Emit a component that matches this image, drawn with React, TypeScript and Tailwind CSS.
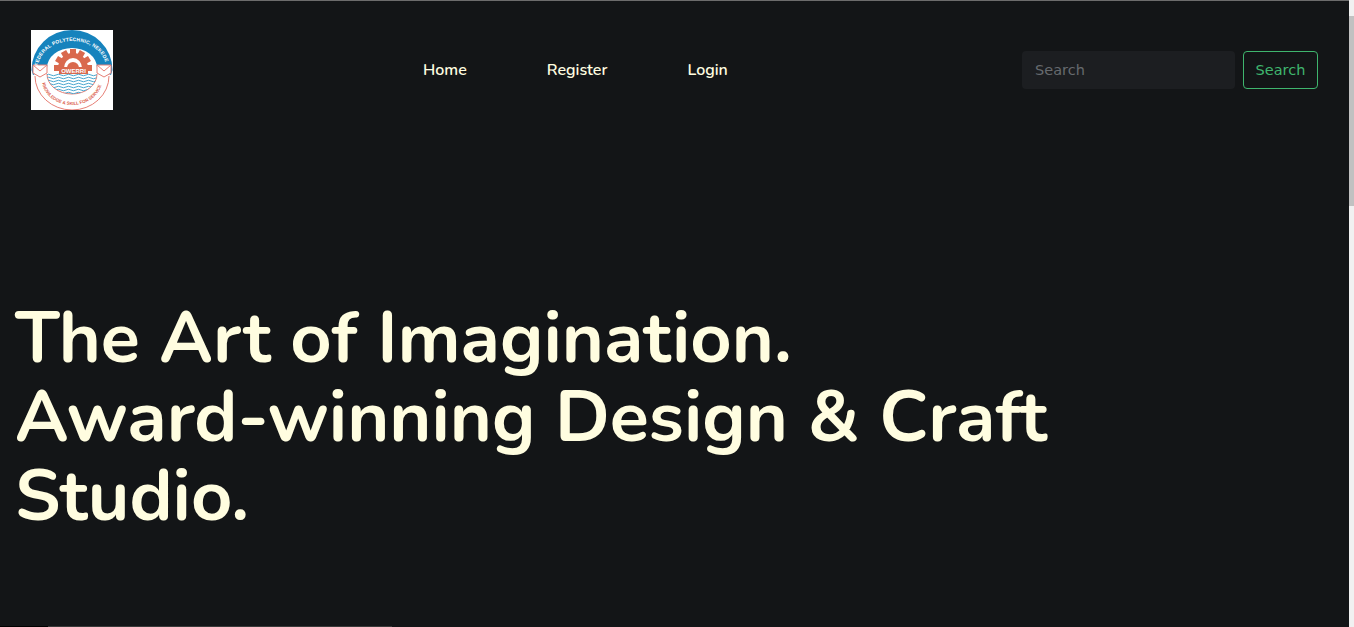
import { useId } from "react";

const gearTeeth = [-90, -60, -30, 0, 30, 60, 90];
const waves = [45, 48, 51, 54, 57, 60, 63];

function Logo() {
  const id = useId();
  return (
    <svg viewBox="0 0 82 80" className="block h-20 w-[82px] bg-white">
      <defs>
        <path id={`${id}top`} d="M7 38A34 27 0 0 1 75 38" />
        <path id={`${id}bot`} d="M11 50A30 25 0 0 0 71 50" />
        <clipPath id={`${id}water`}>
          <ellipse cx="41" cy="44" rx="25" ry="20" />
        </clipPath>
      </defs>
      <path d="M4 46A37 34 0 0 0 78 46" fill="none" stroke="#e77f76" />
      <path d="M16 44A25 20 0 0 0 66 44" fill="none" stroke="#e77f76" />
      <path d="M0.5 40A40.5 40 0 0 1 81.5 40L80 45 66 38A25 20 0 0 0 16 38L2 45Z" fill="#1683bd" />
      <path d="M2 35H16V43L9 47 2 43Z" fill="#fff" stroke="#e77f76" />
      <path d="M2 35L9 41 16 35" fill="none" stroke="#e77f76" />
      <path d="M66 35H80V43L73 47 66 43Z" fill="#fff" stroke="#e77f76" />
      <path d="M66 35L73 41 80 35" fill="none" stroke="#e77f76" />
      <g fill="#d9694e">
        {gearTeeth.map((angle) => (
          <rect key={angle} x="39" y="19" width="6" height="6" transform={`rotate(${angle} 42 38)`} />
        ))}
        <path d="M27 38A15 15 0 0 1 57 38Z" />
      </g>
      <path d="M33 38A9 10 0 0 1 51 38Z" fill="#fff" />
      <path d="M36 38A6 6 0 0 1 48 38Z" fill="#d9694e" />
      <rect x="28" y="37" width="29" height="7" fill="#d9694e" />
      <text x="42.5" y="43" textAnchor="middle" fontSize="6" fontWeight="700" fill="#fff" fontFamily="'Liberation Sans', sans-serif">
        OWERRI
      </text>
      <g clipPath={`url(#${id}water)`} fill="none" stroke="#4aa6cf" strokeWidth="1">
        {waves.map((y) => (
          <path key={y} d={`M15 ${y}q2.5-1.5 5 0t5 0 5 0 5 0 5 0 5 0 5 0 5 0 5 0 5 0 5 0`} />
        ))}
      </g>
      <text fontSize="5" fontWeight="700" fill="#fff" fontFamily="'Liberation Sans', sans-serif">
        <textPath href={`#${id}top`} startOffset="2" textLength="88">FEDERAL POLYTECHNIC, NEKEDE</textPath>
      </text>
      <text fontSize="4.5" fontWeight="700" fill="#dc5f50" fontFamily="'Liberation Sans', sans-serif">
        <textPath href={`#${id}bot`} startOffset="3" textLength="78">KNOWLEDGE &amp; SKILL FOR SERVICE</textPath>
      </text>
    </svg>
  );
}

export default function App() {
  return (
    <div className="flex h-[627px] overflow-hidden bg-[#131517]">
      <div className="relative min-w-0 flex-1 border-t border-[#6c6c6c]">
        <nav className="flex h-[138px] items-center pr-[31px] pl-[31px]">
          <Logo />
          <ul className="ml-[310px] flex gap-20 font-['Nunito',sans-serif] text-base font-semibold text-[#fffde0]">
            <li><a href="#">Home</a></li>
            <li><a href="#">Register</a></li>
            <li><a href="#">Login</a></li>
          </ul>
          <form className="ml-auto flex gap-2 font-['DejaVu_Sans',sans-serif] text-[14.5px]">
            <input
              placeholder="Search"
              className="h-[38px] w-[213px] rounded bg-[#1c1e21] px-[13px] text-white outline-none placeholder:text-[#666a6e]"
            />
            <button className="h-[38px] w-[75px] rounded border border-[#3fb56e] pt-px text-[#3fb56e]">Search</button>
          </form>
        </nav>
        <h1 className="mt-[160px] pl-[15px] font-['Nunito',sans-serif] text-[72px] leading-[79.2px] font-bold text-[#fffde0]">
          <span className="tracking-[-1px]">T</span>he Art of Imagination.
          <br />
          Award-winning Design &amp; Craft
          <br />
          Studio.
        </h1>
        <div className="absolute bottom-0 left-[48px] h-px w-[344px] bg-[#3a3a3a]" />
        <div className="absolute bottom-0 left-0 h-px w-[48px] bg-black" />
      </div>
      <div className="w-[5px] bg-[#f1f1f1] pt-[16px]">
        <div className="h-[190px] bg-[#c1c1c1]" />
      </div>
    </div>
  );
}
